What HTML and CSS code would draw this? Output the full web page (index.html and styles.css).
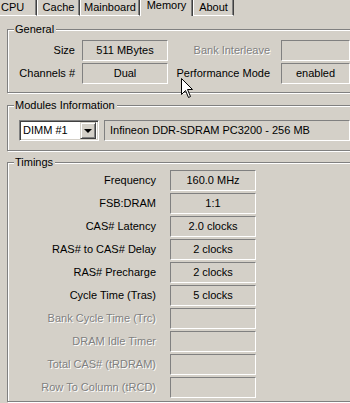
FILE: index.html
```html
<!DOCTYPE html>
<html>
<head>
<meta charset="utf-8">
<link rel="stylesheet" href="styles.css">
</head>
<body>
<div class="window">
  <div class="tabs">
    <div class="tab tab-cpu">CPU</div>
    <div class="tab tab-cache">Cache</div>
    <div class="tab tab-main">Mainboard</div>
    <div class="tab tab-mem active">Memory</div>
    <div class="tab tab-about">About</div>
  </div>
  <div class="panel">
    <section class="group group-general">
      <div class="legend">General</div>
      <div class="general-grid">
        <div class="label">Size</div>
        <div class="box">511 MBytes</div>
        <div class="label label-wide disabled">Bank Interleave</div>
        <div class="box"></div>
        <div class="label">Channels #</div>
        <div class="box">Dual</div>
        <div class="label label-wide">Performance Mode</div>
        <div class="box">enabled</div>
      </div>
    </section>

    <section class="group group-modules">
      <div class="legend">Modules Information</div>
      <div class="modules-row">
        <div class="select">
          <span class="select-text">DIMM #1</span>
          <span class="select-btn"><span class="arrow"></span></span>
        </div>
        <div class="box box-left">Infineon DDR-SDRAM PC3200 - 256 MB</div>
      </div>
    </section>

    <section class="group group-timings">
      <div class="legend">Timings</div>
      <div class="timings-grid">
        <div class="label">Frequency</div><div class="box">160.0 MHz</div>
        <div class="label">FSB:DRAM</div><div class="box">1:1</div>
        <div class="label">CAS# Latency</div><div class="box">2.0 clocks</div>
        <div class="label">RAS# to CAS# Delay</div><div class="box">2 clocks</div>
        <div class="label">RAS# Precharge</div><div class="box">2 clocks</div>
        <div class="label">Cycle Time (Tras)</div><div class="box">5 clocks</div>
        <div class="label disabled">Bank Cycle Time (Trc)</div><div class="box"></div>
        <div class="label disabled">DRAM Idle Timer</div><div class="box"></div>
        <div class="label disabled">Total CAS# (tRDRAM)</div><div class="box"></div>
        <div class="label disabled">Row To Column (tRCD)</div><div class="box"></div>
      </div>
    </section>
  </div>

  <svg class="cursor" width="13" height="22" viewBox="0 0 13 22">
    <path d="M0.5 0.5 L0.5 16.5 L4.5 12.5 L7.5 19.5 L9.5 18.5 L6.5 11.5 L11.5 11.5 Z" fill="#fff" stroke="#000" stroke-width="1" stroke-linejoin="miter"/>
  </svg>
</div>
</body>
</html>
```

FILE: styles.css
```css
html, body {
  margin: 0;
  padding: 0;
  background: #d4d0c8;
  overflow: hidden;
}

body {
  width: 350px;
  height: 403px;
  font-family: "Liberation Sans", Arial, sans-serif;
  font-size: 11px;
  color: #000;
}

.window {
  position: relative;
  width: 350px;
  height: 403px;
  overflow: hidden;
}

/* Tabs */
.tabs {
  display: flex;
  height: 16px;
  align-items: flex-start;
}

.tab {
  box-sizing: border-box;
  height: 16px;
  line-height: 13px;
  text-align: center;
  border-left: 1px solid #fff;
  border-right: 1px solid #404040;
  border-bottom: 1px solid #fff;
  box-shadow: inset -1px 0 0 #808080;
  background: #d4d0c8;
  padding-top: 1px;
  white-space: nowrap;
}

.tab-cpu { width: 37px; border-left: none; text-align: left; padding-left: 1px; }
.tab-cache { width: 43px; }
.tab-main { width: 60px; }
.tab-mem { width: 53px; }
.tab-about { width: 41px; }

.tab.active {
  height: 16px;
  border-bottom: none;
  padding-top: 0;
  line-height: 11px;
}

/* Panel */
.panel {
  padding-left: 7px;
  padding-top: 13px;
}

.group {
  position: relative;
  box-sizing: border-box;
  width: 345px;
  border: 1px solid #808080;
  box-shadow: inset 1px 1px 0 #fff, 1px 1px 0 #fff;
}

.legend {
  position: absolute;
  top: -7px;
  left: 6px;
  padding: 0 2px 0 1px;
  background: #d4d0c8;
  line-height: 13px;
}

.group-general {
  padding: 10px 0 8px 0;
}

.group-modules {
  margin-top: 12px;
  padding: 14px 0 9px 0;
}

.group-timings {
  margin-top: 11px;
  padding: 7px 0 6px 0;
  height: 240px;
}

.label {
  text-align: right;
  padding-right: 7px;
  line-height: 21px;
  white-space: nowrap;
}

.label.disabled {
  color: #808080;
  text-shadow: 1px 1px 0 #fff;
}

.box {
  box-sizing: border-box;
  height: 21px;
  line-height: 19px;
  text-align: center;
  border-top: 1px solid #808080;
  border-left: 1px solid #808080;
  border-bottom: 1px solid #fff;
  border-right: 1px solid #fff;
  white-space: nowrap;
  overflow: hidden;
}

.box-left {
  text-align: left;
  padding-left: 5px;
}

/* General */
.general-grid {
  display: grid;
  grid-template-columns: 74px 86px 113px 69px;
  grid-auto-rows: 21px;
  row-gap: 2px;
}

.general-grid .label-wide {
  padding-right: 11px;
}

/* Modules */
.modules-row {
  display: flex;
  gap: 5px;
  padding-left: 11px;
}

.select {
  box-sizing: border-box;
  width: 80px;
  height: 21px;
  display: flex;
  align-items: center;
  background: #fff;
  border-top: 1px solid #808080;
  border-left: 1px solid #808080;
  border-bottom: 1px solid #fff;
  border-right: 1px solid #fff;
  box-shadow: inset 1px 1px 0 #404040, inset -1px -1px 0 #d4d0c8;
  padding: 2px 2px 2px 3px;
}

.select-text {
  flex: 1;
  line-height: 15px;
}

.select-btn {
  box-sizing: border-box;
  width: 16px;
  height: 17px;
  display: flex;
  align-items: center;
  justify-content: center;
  background: #d4d0c8;
  border-top: 1px solid #d4d0c8;
  border-left: 1px solid #d4d0c8;
  border-right: 1px solid #404040;
  border-bottom: 1px solid #404040;
  box-shadow: inset 1px 1px 0 #fff, inset -1px -1px 0 #808080;
}

.arrow {
  width: 0;
  height: 0;
  border-left: 4px solid transparent;
  border-right: 4px solid transparent;
  border-top: 4px solid #000;
  margin-top: 1px;
}

.modules-row .box {
  width: 246px;
}

/* Timings */
.timings-grid {
  display: grid;
  grid-template-columns: 162px 86px;
  grid-auto-rows: 21px;
  row-gap: 2px;
}

.timings-grid .label {
  padding-right: 14px;
}

/* Cursor overlay */
.cursor {
  position: absolute;
  left: 181px;
  top: 78px;
}
```
